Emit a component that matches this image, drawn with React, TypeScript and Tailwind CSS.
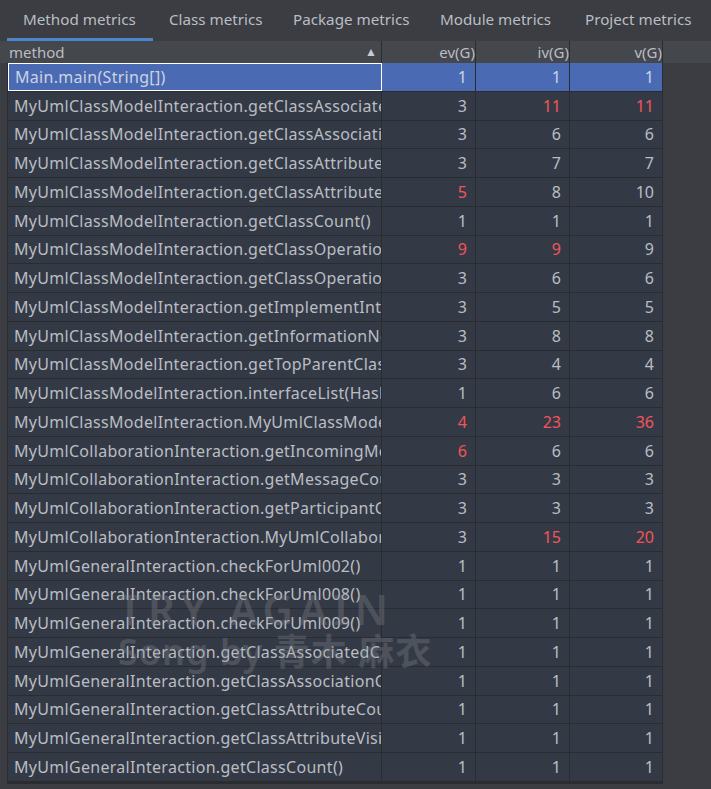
import React from "react";

type Row = { name: string; ev: number; iv: number; v: number; hot?: [boolean, boolean, boolean] };

const TABS = [
  { label: "Method metrics", w: "w-[146px]" },
  { label: "Class metrics", w: "w-[124px]" },
  { label: "Package metrics", w: "w-[147px]" },
  { label: "Module metrics", w: "w-[145px]" },
  { label: "Project metrics", w: "w-[140px]" },
];

const CM = "MyUmlClassModelInteraction.";
const CO = "MyUmlCollaborationInteraction.";
const GE = "MyUmlGeneralInteraction.";

const ROWS: Row[] = [
  { name: "Main.main(String[])", ev: 1, iv: 1, v: 1 },
  { name: CM + "getClassAssociatedClassList(String)", ev: 3, iv: 11, v: 11, hot: [false, true, true] },
  { name: CM + "getClassAssociationCount(String)", ev: 3, iv: 6, v: 6 },
  { name: CM + "getClassAttributeCount(String, AttributeQueryType)", ev: 3, iv: 7, v: 7 },
  { name: CM + "getClassAttributeVisibility(String, String)", ev: 5, iv: 8, v: 10, hot: [true, false, false] },
  { name: CM + "getClassCount()", ev: 1, iv: 1, v: 1 },
  { name: CM + "getClassOperationCount(String, OperationQueryType[])", ev: 9, iv: 9, v: 9, hot: [true, true, false] },
  { name: CM + "getClassOperationVisibility(String, String)", ev: 3, iv: 6, v: 6 },
  { name: CM + "getImplementInterfaceList(String)", ev: 3, iv: 5, v: 5 },
  { name: CM + "getInformationNotHidden(String)", ev: 3, iv: 8, v: 8 },
  { name: CM + "getTopParentClass(String)", ev: 3, iv: 4, v: 4 },
  { name: CM + "interfaceList(HashSet<String>)", ev: 1, iv: 6, v: 6 },
  { name: CM + "MyUmlClassModelInteraction(UmlElement...)", ev: 4, iv: 23, v: 36, hot: [true, true, true] },
  { name: CO + "getIncomingMessageCount(String, String)", ev: 6, iv: 6, v: 6, hot: [true, false, false] },
  { name: CO + "getMessageCount(String)", ev: 3, iv: 3, v: 3 },
  { name: CO + "getParticipantCount(String)", ev: 3, iv: 3, v: 3 },
  { name: CO + "MyUmlCollaborationInteraction(UmlElement...)", ev: 3, iv: 15, v: 20, hot: [false, true, true] },
  { name: GE + "checkForUml002()", ev: 1, iv: 1, v: 1 },
  { name: GE + "checkForUml008()", ev: 1, iv: 1, v: 1 },
  { name: GE + "checkForUml009()", ev: 1, iv: 1, v: 1 },
  { name: GE + "getClassAssociatedClassList(String)", ev: 1, iv: 1, v: 1 },
  { name: GE + "getClassAssociationCount(String)", ev: 1, iv: 1, v: 1 },
  { name: GE + "getClassAttributeCount(String, AttributeQueryType)", ev: 1, iv: 1, v: 1 },
  { name: GE + "getClassAttributeVisibility(String, String)", ev: 1, iv: 1, v: 1 },
  { name: GE + "getClassCount()", ev: 1, iv: 1, v: 1 },
];

function NumCell({ value, hot }: { value: number; hot?: boolean }) {
  return (
    <div
      className={`flex items-center justify-end border-r border-[#2a2c30] pr-[8px] ${
        hot ? "text-[#f2545b]" : ""
      }`}
    >
      {value}
    </div>
  );
}

export default function App() {
  return (
    <div
      className="relative h-[789px] w-[711px] overflow-hidden bg-[#3b3d42] text-[15px] text-[#babdc4]"
      style={{ fontFamily: '"Noto Sans", "Open Sans", sans-serif' }}
    >
      {/* tabs */}
      <div className="flex h-[41px] pl-[7px]">
        {TABS.map((t, i) => (
          <div
            key={t.label}
            className={`flex shrink-0 items-center whitespace-nowrap pl-[16px] pt-[1px] text-[15.2px] ${t.w} ${
              i === 0 ? "border-b-[3px] border-[#4a86c8]" : "border-b-[3px] border-transparent"
            }`}
          >
            {t.label}
          </div>
        ))}
      </div>

      {/* header */}
      <div className="grid h-[22px] grid-cols-[7px_375px_94px_94px_93px_1fr] bg-[#44474b] leading-[22px]">
        <div />
        <div className="flex items-center justify-between border-r border-[#2a2c30] pl-[2px] pr-[4px]">
          <span>method</span>
          <span className="text-[12px] text-[#c9ccd2]">▲</span>
        </div>
        <div className="border-r border-[#2a2c30] text-right">ev(G)</div>
        <div className="border-r border-[#2a2c30] text-right">iv(G)</div>
        <div className="border-r border-[#2a2c30] text-right">v(G)</div>
        <div />
      </div>

      {/* rows */}
      <div className="ml-[7px] w-[656px] border-b-2 border-l border-[#2a2c30] text-[16px]">
        {ROWS.map((r, i) => {
          const sel = i === 0;
          return (
            <div
              key={i}
              className={`grid h-[28.75px] grid-cols-[374px_94px_94px_93px] border-b border-[#2a2c30] ${
                sel ? "bg-[#4a6bb3] text-[#ccd3e2]" : "bg-[#343a45]"
              }`}
            >
              <div
                className={`flex items-center overflow-hidden whitespace-nowrap pl-[6px] tracking-[0.3px] ${
                  sel ? "border border-white" : "border-r border-[#2a2c30]"
                }`}
              >
                {r.name}
              </div>
              <NumCell value={r.ev} hot={r.hot?.[0]} />
              <NumCell value={r.iv} hot={r.hot?.[1]} />
              <NumCell value={r.v} hot={r.hot?.[2]} />
            </div>
          );
        })}
      </div>

      {/* gif watermark */}
      <div className="pointer-events-none absolute left-[118px] top-[588px] select-none font-semibold leading-none text-[#8a8c92] opacity-30">
        <div className="text-[42px] tracking-[6px]">TRY AGAIN</div>
        <div
          className="mt-[4px] text-[36px] tracking-[1px]"
          style={{ fontFamily: '"Noto Sans", "Noto Sans CJK SC", sans-serif' }}
        >
          Song by 青木 麻衣
        </div>
      </div>
    </div>
  );
}
